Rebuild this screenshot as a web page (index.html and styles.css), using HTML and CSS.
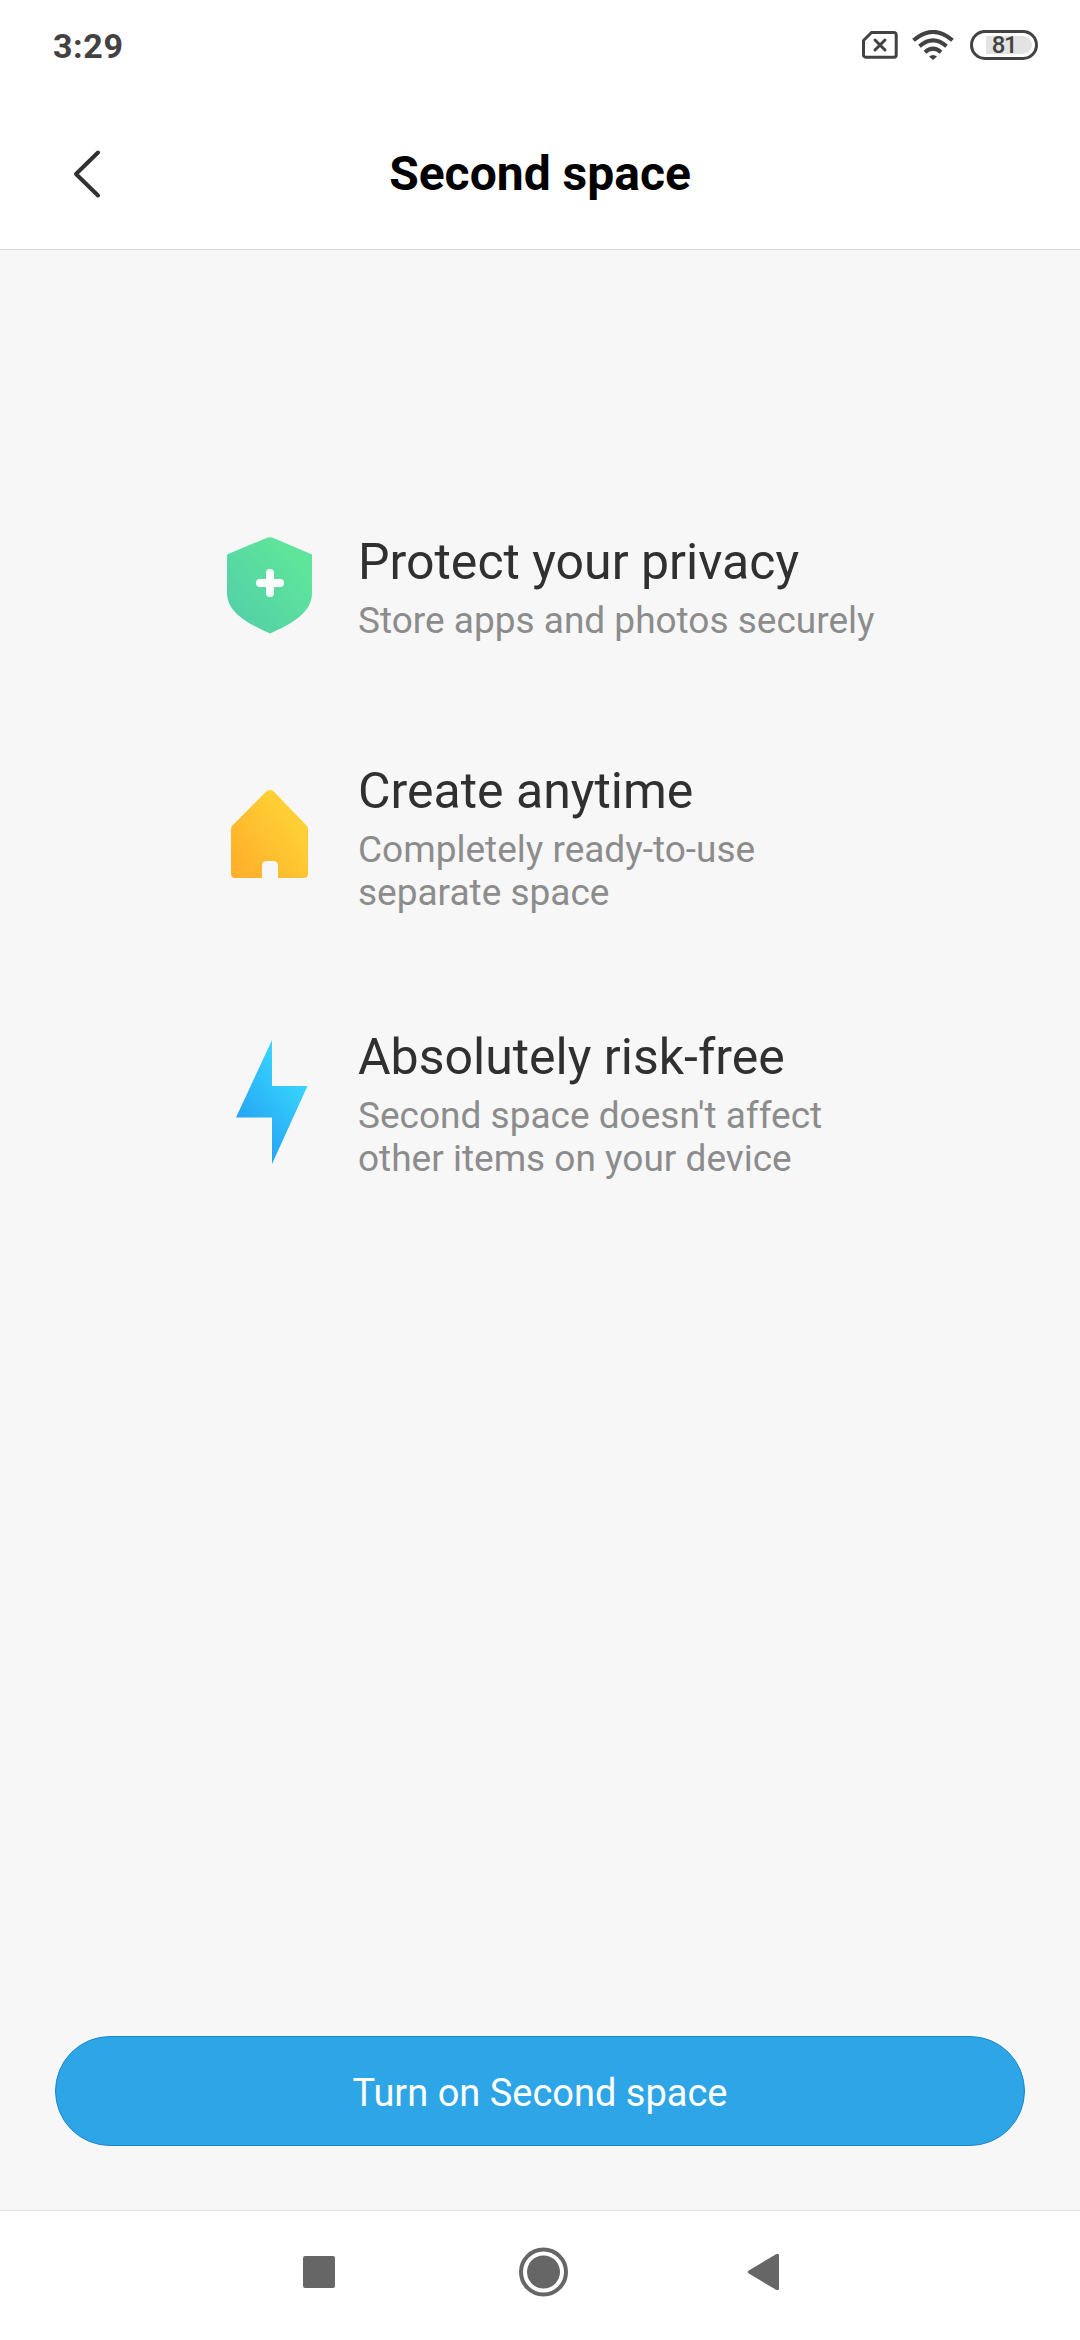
FILE: index.html
```html
<!DOCTYPE html>
<html lang="en">
<head>
    <meta charset="UTF-8">
    <meta name="viewport" content="width=device-width, initial-scale=1.0">
    <title>Second space</title>
    <link rel="stylesheet" href="styles.css">
</head>
<body>
    <div class="status-bar">
        <span class="time">3:29</span>
        <div class="status-icons">
            <svg class="sim-icon" width="38" height="30" viewBox="0 0 38 30">
                <path d="M10.5 2.5H33a2.2 2.2 0 0 1 2.2 2.2V25a2.2 2.2 0 0 1-2.2 2.2H4.7A2.2 2.2 0 0 1 2.5 25V10.5z" />
                <path d="M14 10l10 10M24 10L14 20" />
            </svg>
            <svg class="wifi-icon" width="42" height="30" viewBox="0 0 42 30">
                <path d="M1.5 10.300Q21-6.500 40.500 10.300" />
                <path d="M7.500 16.300Q21 4.500 34.500 16.300" />
                <path d="M13 22.200Q21 15 29 22.200" />
                <path class="wifi-dot" d="M17 26.500Q21 23.500 25 26.500L21 30z" />
            </svg>
            <div class="battery">
                <div class="battery-level"></div>
                <span>81</span>
            </div>
        </div>
    </div>

    <header>
        <a href="#" class="back" aria-label="Back">
            <svg width="28" height="50" viewBox="0 0 28 50">
                <path d="M25 3.500L3 25l22 21.500" />
            </svg>
        </a>
        <h1>Second space</h1>
    </header>

    <main>
        <div class="features">
            <div class="feature">
                <div class="feature-icon">
                    <svg width="86" height="98" viewBox="0 0 86 98">
                        <defs>
                            <linearGradient id="green" x1="0.15" y1="0.85" x2="0.8" y2="0.2">
                                <stop offset="0" stop-color="#54d1a7" />
                                <stop offset="1" stop-color="#5fe59b" />
                            </linearGradient>
                        </defs>
                        <path fill="url(#green)" d="M0 17.500L39.500 .900Q43-.300 46.500 .900L85 17.500V56C85 76 64 87 43 96.500C22 87 0 76 0 56z" />
                        <path class="plus" d="M43 36v20M33 46h20" />
                    </svg>
                </div>
                <div class="feature-text">
                    <h2>Protect your privacy</h2>
                    <p>Store apps and photos securely</p>
                </div>
            </div>

            <div class="feature">
                <div class="feature-icon home">
                    <svg width="78" height="88" viewBox="0 0 78 88">
                        <defs>
                            <linearGradient id="yellow" x1="0.1" y1="0.9" x2="0.8" y2="0.3">
                                <stop offset="0" stop-color="#ffb02c" />
                                <stop offset="1" stop-color="#ffd035" />
                            </linearGradient>
                        </defs>
                        <path fill="url(#yellow)" d="M35.500 1.300Q39-1.200 42.500 1.300L76 36Q77 37.200 77 39.500V83.500Q77 88 72.500 88H47V76Q47 71 42 71H36Q31 71 31 76V88H4.500Q0 88 0 83.500V39.500Q0 37.200 1 36z" />
                    </svg>
                </div>
                <div class="feature-text">
                    <h2>Create anytime</h2>
                    <p>Completely ready-to-use<br>separate space</p>
                </div>
            </div>

            <div class="feature">
                <div class="feature-icon bolt">
                    <svg width="72" height="124" viewBox="0 0 72 124">
                        <defs>
                            <linearGradient id="blue" x1="0.2" y1="0.85" x2="0.7" y2="0.15">
                                <stop offset="0" stop-color="#24a0f2" />
                                <stop offset="1" stop-color="#38d7fe" />
                            </linearGradient>
                        </defs>
                        <path fill="url(#blue)" d="M36 0V46H71.500L36 124V77.500H0z" />
                    </svg>
                </div>
                <div class="feature-text">
                    <h2>Absolutely risk-free</h2>
                    <p>Second space doesn't affect<br>other items on your device</p>
                </div>
            </div>
        </div>

        <button class="btn">Turn on Second space</button>
    </main>

    <nav>
        <svg width="32" height="32" viewBox="0 0 32 32">
            <rect width="32" height="32" rx="2" />
        </svg>
        <svg class="home-btn" width="50" height="50" viewBox="0 0 50 50">
            <circle class="ring" cx="25.500" cy="25" r="22.500" />
            <circle cx="25.500" cy="25" r="16.500" />
        </svg>
        <svg width="32" height="38" viewBox="0 0 32 38">
            <path d="M1.800 17.500L29 1.200Q32 0 32 2.500V35.500Q32 38 29 36.800L1.800 20.500Q0 19 1.800 17.500z" />
        </svg>
    </nav>
</body>
</html>
```
FILE: styles.css
```css
* {
    margin: 0;
    padding: 0;
    box-sizing: border-box;
}

body {
    height: 2340px;
    display: flex;
    flex-direction: column;
    font-family: Roboto, sans-serif;
    background-color: #f7f7f7;
    color: #303030;
}

.status-bar {
    height: 90px;
    padding: 0 42px 0 53px;
    display: flex;
    justify-content: space-between;
    align-items: center;
    background: white;
}

.time {
    font-size: 34px;
    font-weight: 700;
    letter-spacing: 0.6px;
    padding-top: 2px;
    color: #424242;
}

.status-icons {
    display: flex;
    align-items: center;
}

.sim-icon,
.wifi-icon {
    fill: none;
    stroke: #424242;
    stroke-width: 3;
}

.sim-icon {
    stroke-linecap: round;
    margin-right: 13px;
}

.wifi-icon {
    stroke-width: 4;
    margin-right: 16px;
}

.wifi-icon .wifi-dot {
    fill: #424242;
    stroke: none;
}

.battery {
    position: relative;
    width: 68px;
    height: 30px;
    border: 3px solid #424242;
    border-radius: 15px;
    color: #424242;
    font-size: 24px;
    font-weight: 500;
    letter-spacing: -1.5px;
    line-height: 25px;
    text-align: center;
}

.battery span {
    position: relative;
}

.battery-level {
    position: absolute;
    top: 3px;
    right: 3px;
    width: 46px;
    height: 18px;
    border-radius: 0 9px 9px 0;
    background: #e3e3e3;
}

header {
    height: 160px;
    padding: 8px 73px 0;
    display: grid;
    grid-template-columns: 28px 1fr 28px;
    align-items: center;
    background: white;
    border-bottom: 1px solid #d9d9d9;
}

.back svg {
    display: block;
    fill: none;
    stroke: #303030;
    stroke-width: 4;
    stroke-linecap: round;
    stroke-linejoin: round;
}

h1 {
    font-size: 48px;
    font-weight: 700;
    color: black;
    text-align: center;
}

main {
    flex: 1;
    display: flex;
    flex-direction: column;
    justify-content: space-between;
    padding: 283px 55px 64px;
}

.features {
    display: flex;
    flex-direction: column;
    gap: 114px;
    padding-left: 169px;
}

.feature {
    display: flex;
    min-height: 115px;
}

.feature-icon {
    width: 134px;
    padding: 4px 0 0 3px;
}

.feature-icon.home {
    padding: 28px 0 0 7px;
}

.feature-icon.bolt {
    padding: 12px 0 0 12px;
}

.feature-icon svg {
    display: block;
}

.plus {
    fill: none;
    stroke: white;
    stroke-width: 8;
    stroke-linecap: round;
}

.feature-text h2 {
    font-size: 50px;
    font-weight: 400;
    line-height: 59px;
    margin-bottom: 7px;
}

.feature-text p {
    font-size: 37px;
    line-height: 43px;
    color: #8c8c8c;
}

.btn {
    height: 110px;
    padding-top: 3px;
    border: 1px solid #1a87cb;
    border-radius: 55px;
    background: #2ea5e6;
    color: white;
    font-family: inherit;
    font-size: 38px;
}

nav {
    height: 130px;
    padding: 0 301px 7px 303px;
    display: flex;
    justify-content: space-between;
    align-items: center;
    background: white;
    border-top: 1px solid #e0e0e0;
    fill: #666;
}

.home-btn {
    margin-left: 4px;
}

.ring {
    fill: none;
    stroke: #666;
    stroke-width: 4;
}
```
